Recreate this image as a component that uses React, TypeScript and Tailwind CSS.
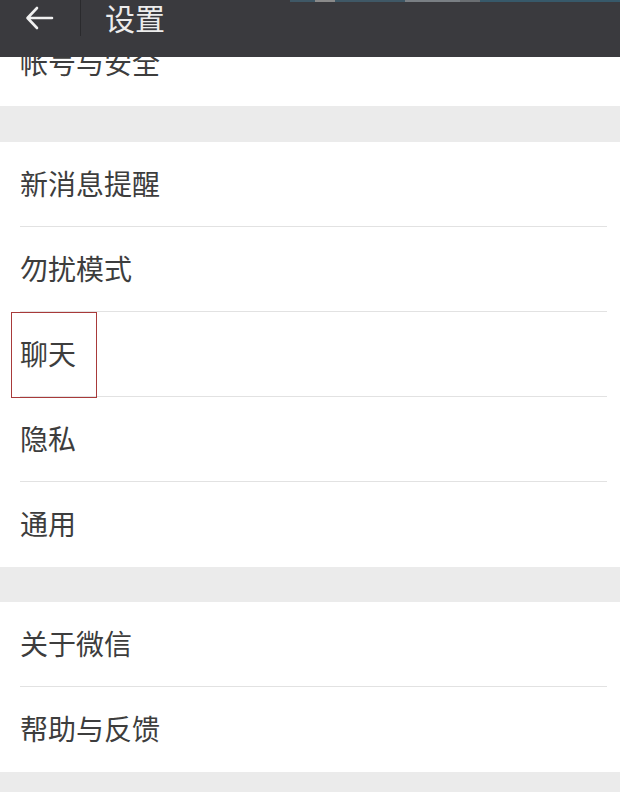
const font = { fontFamily: '"Noto Sans CJK SC", "Noto Sans", sans-serif' };

const Row = ({ label, last, mark }: { label: string; last?: boolean; mark?: boolean }) => (
  <div className="relative bg-white">
    <div className={`${last ? "h-[85px]" : "h-[84px]"} flex items-center pl-5 pb-[3px] text-[28px] text-[#3d3d3d] leading-none`}>{label}</div>
    {!last && <div className="h-px ml-5 mr-[13px] bg-[#e2e2e2]" />}
    {mark && <div className="absolute z-10 left-[11px] top-0 w-[86px] h-[86px] border border-[#a83a3a]" />}
  </div>
);

const Gap = ({ h }: { h: string }) => <div className={`bg-[#ebebeb] ${h}`} />;

export default function App() {
  return (
    <div className="relative w-[620px] h-[792px] overflow-hidden bg-[#ebebeb]" style={font}>
      <div className="absolute top-0 left-0 right-0 h-[57px] bg-[#3a3a3e] z-20">
        <div className="flex h-[2px]">
          <div className="w-[290px] bg-[#3a3a3e]" />
          <div className="w-[25px] bg-[#3f5866]" />
          <div className="w-[20px] bg-[#8a8a8a]" />
          <div className="w-[70px] bg-[#3f5866]" />
          <div className="w-[55px] bg-[#7a7f84]" />
          <div className="w-[20px] bg-[#6a6e72]" />
          <div className="flex-1 bg-[#37596a]" />
        </div>
        <div className="flex items-start h-[55px] -mt-[2px]">
          <div className="w-[80px] h-[36px] flex items-center justify-center">
            <svg width="30" height="24" viewBox="0 0 30 24" fill="none" stroke="#f0f0f0" strokeWidth="2.6" strokeLinecap="round" strokeLinejoin="round">
              <path d="M27 12H3M12 2L2.5 12L12 22" />
            </svg>
          </div>
          <div className="w-px h-[36px] bg-[#2a2a2d]" />
          <div className="pl-[24px] pt-[1px] h-[32px] flex items-center text-[30px] text-[#ececec] leading-none">设置</div>
        </div>
      </div>

      <div className="pt-[21px]">
        <Row label="帐号与安全" last />
        <Gap h="h-[36px]" />
        <Row label="新消息提醒" />
        <Row label="勿扰模式" />
        <Row label="聊天" mark />
        <Row label="隐私" />
        <Row label="通用" last />
        <Gap h="h-[35px]" />
        <Row label="关于微信" />
        <Row label="帮助与反馈" last />
        <Gap h="h-[40px]" />
      </div>
    </div>
  );
}
